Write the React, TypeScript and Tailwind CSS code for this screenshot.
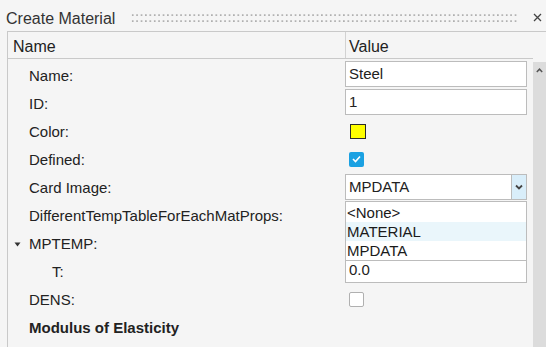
import React from 'react';

const labelCls = 'w-[337px] shrink-0 flex items-center pl-[21px] pt-[3px] text-[15px] text-[#222]';

const TextBox: React.FC<{ value: string }> = ({ value }) => (
  <div className="h-[26px] w-[182px] bg-white border border-[#bcbcbc] flex items-center px-[3px] pt-[1px] text-[15px] text-[#222]">
    {value}
  </div>
);

const Row: React.FC<{ label: React.ReactNode; labelClass?: string; children?: React.ReactNode; align?: string }> = ({
  label,
  labelClass = '',
  children,
  align = 'items-center',
}) => (
  <div className="flex h-[28px]">
    <div className={`${labelCls} ${labelClass}`}>{label}</div>
    <div className={`flex ${align} w-[182px] relative`}>{children}</div>
  </div>
);

const Grip = () => (
  <svg width="388" height="10" className="ml-[16px] mt-[2px]">
    <defs>
      <pattern id="grip" width="4.4" height="6" patternUnits="userSpaceOnUse">
        <rect x="1" y="1.4" width="1.4" height="1.4" fill="#8c8c8c" />
      </pattern>
    </defs>
    <rect x="0" y="0" width="388" height="10" fill="url(#grip)" />
  </svg>
);

export default function App() {
  return (
    <div className="w-[546px] h-[347px] overflow-hidden bg-[#f5f5f5] font-['Liberation_Sans',Arial,sans-serif]">
      {/* title bar */}
      <div className="h-[31px] flex items-center pl-[6px] pt-[3px]">
        <span className="text-[16px] text-[#333] leading-none pt-[3px]">Create Material</span>
        <Grip />
        <svg width="9" height="9" viewBox="0 0 9 9" className="ml-[14px] mt-[1px]">
          <path d="M1 1 L8 8 M8 1 L1 8" stroke="#444" strokeWidth="1.3" fill="none" />
        </svg>
      </div>

      <div className="ml-[7px] border-l border-t border-[#c9c9c9] h-[316px] flex flex-col">
        {/* header */}
        <div className="flex h-[27px] mr-[13px] border-b border-[#c9c9c9] text-[16px] text-[#222] shrink-0">
          <div className="w-[337px] flex items-center pl-[5px] pt-[3px]">Name</div>
          <div className="flex-1 flex items-center pl-[3px] pt-[3px] border-l border-[#d2d2d2]">Value</div>
        </div>

        <div className="flex flex-1">
          <div className="flex-1 pt-[2px]">
            <Row label="Name:" align="items-start">
              <TextBox value="Steel" />
            </Row>
            <Row label="ID:" align="items-start">
              <TextBox value="1" />
            </Row>
            <Row label="Color:">
              <div className="ml-[5px] w-[16px] h-[15px] bg-[#ffff00] border border-[#2b2b2b]" />
            </Row>
            <Row label="Defined:">
              <div className="ml-[4px] w-[15px] h-[15px] rounded-[2px] bg-[#1ba1e2] flex items-center justify-center">
                <svg width="9" height="8" viewBox="0 0 9 8">
                  <path d="M1 4 L3.5 6.5 L8 1.5" stroke="#fff" strokeWidth="1.6" fill="none" />
                </svg>
              </div>
            </Row>
            <Row label="Card Image:" align="items-start">
              <div className="relative mt-[1px] w-[182px]">
                <div className="h-[26px] bg-white border border-[#bcbcbc] flex text-[15px] text-[#222]">
                  <div className="flex-1 flex items-center px-[3px] pt-[1px]">MPDATA</div>
                  <div className="w-[15px] border-l border-[#bcbcbc] bg-[#d9eefa] flex items-center justify-center">
                    <svg width="8" height="6" viewBox="0 0 8 6">
                      <path d="M1 1.5 L4 4.5 L7 1.5" stroke="#444" strokeWidth="1.8" fill="none" />
                    </svg>
                  </div>
                </div>
                <div className="absolute left-0 top-[calc(100%+1px)] w-[182px] z-10 bg-white border border-[#bcbcbc] pt-[1px] text-[15px] text-[#1a1a1a]">
                  <div className="h-[19px] flex items-center pl-[1px] pt-[1px]">&lt;None&gt;</div>
                  <div className="h-[19px] flex items-center pl-[1px] pt-[1px] bg-[#eaf6fb]">MATERIAL</div>
                  <div className="h-[19px] flex items-center pl-[1px] pt-[1px]">MPDATA</div>
                </div>
              </div>
            </Row>
            <Row label="DifferentTempTableForEachMatProps:" />
            <Row
              label={
                <>
                  <svg width="7" height="5" viewBox="0 0 7 5" className="-ml-[15px] mr-[8px]">
                    <path d="M0.5 0.5 L6.5 0.5 L3.5 4.5 Z" fill="#333" />
                  </svg>
                  MPTEMP:
                </>
              }
            />
            <Row label="T:" labelClass="pl-[44px]" align="items-start">
              <TextBox value="0.0" />
            </Row>
            <Row label="DENS:">
              <div className="ml-[4px] w-[15px] h-[15px] rounded-[2px] bg-white border border-[#b0b0b0]" />
            </Row>
            <Row label="Modulus of Elasticity" labelClass="font-bold text-[#111]" />
          </div>

          {/* scrollbar */}
          <div className="w-[13px] mt-[3px] bg-[#dcdcdc] flex justify-center pt-[6px]">
            <svg width="7" height="5" viewBox="0 0 7 5">
              <path d="M0.8 4 L3.5 1.2 L6.2 4" stroke="#555" strokeWidth="1.5" fill="none" />
            </svg>
          </div>
        </div>
      </div>
    </div>
  );
}
